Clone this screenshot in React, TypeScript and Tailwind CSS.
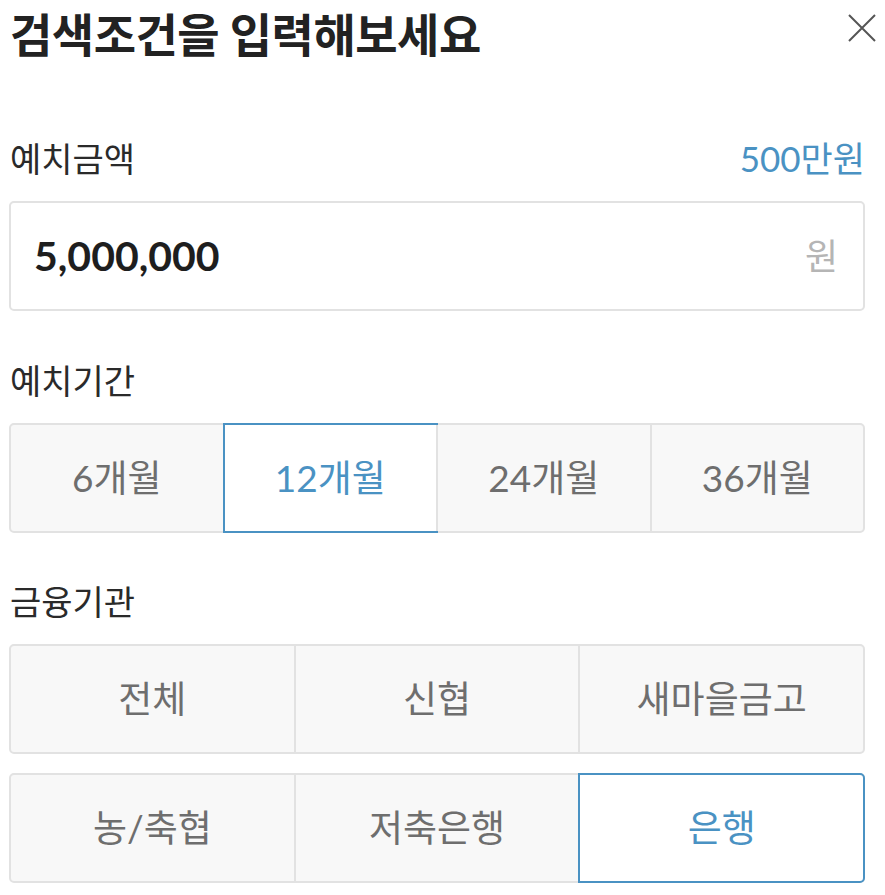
import React, { useState } from "react";

const FONT = { fontFamily: 'Lato, "Noto Sans CJK KR", "Noto Sans", sans-serif' };

const periods = ["6개월", "12개월", "24개월", "36개월"];
const institutions = [
  ["전체", "신협", "새마을금고"],
  ["농/축협", "저축은행", "은행"],
];

function Segment({
  items,
  selected,
  onSelect,
}: {
  items: string[];
  selected: string;
  onSelect: (v: string) => void;
}) {
  return (
    <div className="flex h-[110px] rounded-[5px] border-2 border-[#e2e2e2] bg-[#f8f8f8]">
      {items.map((item, i) => {
        const active = item === selected;
        return (
          <button
            key={item}
            onClick={() => onSelect(item)}
            className={
              "relative flex flex-1 items-center justify-center text-[37px] " +
              (i > 0 ? "border-l-2 border-[#e2e2e2] " : "") +
              (active ? "text-[#4a92c3]" : "text-[#6e6e6e]")
            }
          >
            {active && (
              <span
                className={
                  "pointer-events-none absolute -inset-y-[2px] -left-[2px] -right-[2px] border-2 border-[#4a92c3] bg-white " +
                  (i === items.length - 1 ? "rounded-r-[5px]" : "") +
                  (i === 0 ? "rounded-l-[5px]" : "")
                }
              />
            )}
            <span className="relative">{item}</span>
          </button>
        );
      })}
    </div>
  );
}

export default function App() {
  const [period, setPeriod] = useState("12개월");
  const [inst, setInst] = useState("은행");

  return (
    <div style={FONT} className="min-h-[895px] w-[885px] bg-white pl-[9px] pr-[20px]">
      <div className="flex h-[68px] items-center justify-between">
        <h1 className="ml-[1px] text-[46px] font-bold tracking-[-0.5px] text-[#222]">
          검색조건을 입력해보세요
        </h1>
        <button className="-mr-[12px] -mt-[12px] flex h-[30px] w-[30px] items-center justify-center">
          <svg width="30" height="30" viewBox="0 0 30 30" fill="none">
            <path d="M2 2 L28 28 M28 2 L2 28" stroke="#555" strokeWidth="2" />
          </svg>
        </button>
      </div>

      <div className="mt-[66px] flex h-[48px] items-center justify-between">
        <span className="ml-[1px] text-[34px] text-[#2a2a2a]">예치금액</span>
        <span className="text-[35px] text-[#4a92c3]">500만원</span>
      </div>

      <div className="mt-[19px] flex h-[110px] items-center justify-between rounded-[5px] border-2 border-[#e2e2e2] bg-white pl-[23px] pr-[25px]">
        <span className="text-[41px] font-bold text-[#1e1e1e]">5,000,000</span>
        <span className="text-[36px] text-[#b5b5b5]">원</span>
      </div>

      <div className="mt-[45px] flex h-[48px] items-center">
        <span className="ml-[1px] text-[34px] text-[#2a2a2a]">예치기간</span>
      </div>
      <div className="mt-[19px]">
        <Segment items={periods} selected={period} onSelect={setPeriod} />
      </div>

      <div className="mt-[44px] flex h-[48px] items-center">
        <span className="ml-[1px] text-[34px] text-[#2a2a2a]">금융기관</span>
      </div>
      <div className="mt-[19px] flex flex-col gap-[19px]">
        {institutions.map((row, r) => (
          <Segment key={r} items={row} selected={inst} onSelect={setInst} />
        ))}
      </div>
    </div>
  );
}
